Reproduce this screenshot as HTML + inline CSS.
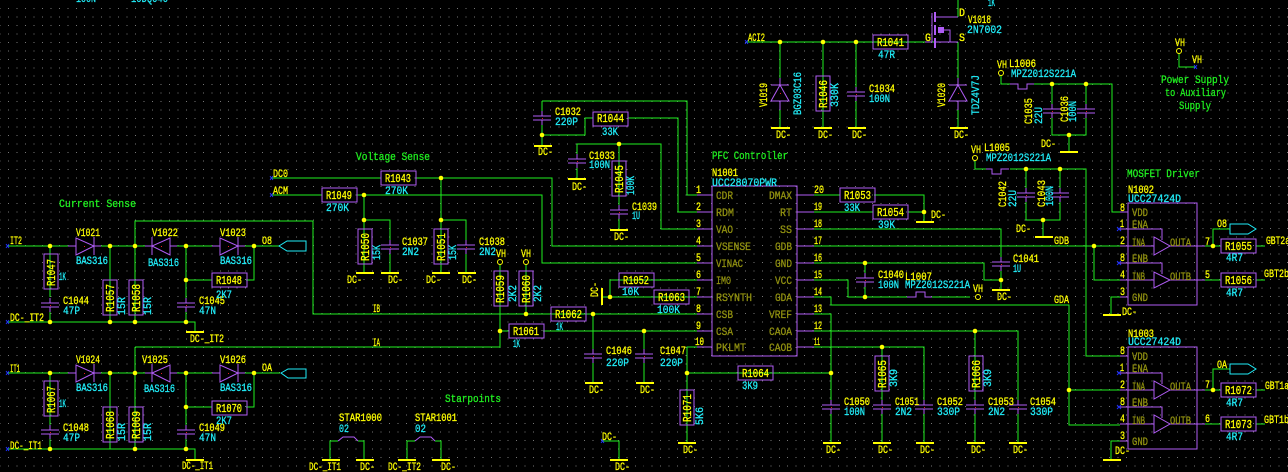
<!DOCTYPE html>
<html><head><meta charset="utf-8"><style>
html,body{margin:0;padding:0;background:#000}
svg{display:block}
text{font-family:"Liberation Mono",monospace;font-size:11px}
.y{fill:#ffff00;stroke:#ffff00;stroke-width:.3}
.c{fill:#20ecf8;stroke:#20ecf8;stroke-width:.3}
.g{fill:#20f020;stroke:#20f020;stroke-width:.3;font-size:11px}
.o{fill:#909010;stroke:#909010;stroke-width:.3}
.b{font-size:12px}
.w{fill:none;stroke:#20f020;stroke-width:1;shape-rendering:crispEdges}
.p{fill:none;stroke:#b05cf5;stroke-width:1;shape-rendering:crispEdges}
.t{fill:none;stroke:#ffff00;stroke-width:2;shape-rendering:crispEdges}
.d{fill:#ffff00}
</style></head><body>
<svg xmlns="http://www.w3.org/2000/svg" width="1288" height="472" viewBox="0 0 1288 472">
<defs>
<g id="cap"><rect x="-9" y="-2" width="18" height="4" fill="#000"/><path class="p" d="M-9-2H9M-9 2H9M0-7V-2M0 2V7"/><rect x="0" y="0" width="1" height="1" fill="#e02020"/></g>
<g id="rv"><rect x="0" y="0" width="14" height="35" fill="#000" class="p"/></g>
<g id="rh"><rect x="0" y="0" width="35" height="14" fill="#000" class="p"/></g>
<g id="dr"><rect x="0" y="-9" width="18" height="18" fill="#000"/><path d="M0-8V9L18 0Z" fill="#000" stroke="#b05cf5"/><path class="p" d="M18-9V9M-8 0H0M18 0H25"/><rect x="8" y="0" width="1" height="1" fill="#e02020"/></g>
<g id="dl"><rect x="0" y="-9" width="18" height="18" fill="#000"/><path d="M18-8V9L0 0Z" fill="#000" stroke="#b05cf5"/><path class="p" d="M0-9V9M-7 0H0M18 0H25"/><rect x="9" y="0" width="1" height="1" fill="#e02020"/></g>
<g id="dv"><rect x="-9" y="0" width="18" height="16" fill="#000"/><path d="M0 0L-9 16H9Z" fill="#000" stroke="#b05cf5"/><path class="p" d="M-9 0H9M0-7V0M0 16V25"/><rect x="0" y="8" width="1" height="1" fill="#e02020"/></g>
<g id="ind"><rect x="0" y="-1" width="24" height="2" fill="#000"/></g>
</defs>
<rect width="1288" height="472" fill="#000"/>
<!-- grid dots -->
<path fill="none" stroke="#767676" stroke-width="1" stroke-dasharray="1 7.47" stroke-dashoffset="-8" shape-rendering="crispEdges" d="M0 8.47H1288M0 16.94H1288M0 25.41H1288M0 33.88H1288M0 42.35H1288M0 50.82H1288M0 59.29H1288M0 67.76H1288M0 76.23H1288M0 84.7H1288M0 93.17H1288M0 101.64H1288M0 110.11H1288M0 118.58H1288M0 127.05H1288M0 135.52H1288M0 143.99H1288M0 152.46H1288M0 160.93H1288M0 169.4H1288M0 177.87H1288M0 186.34H1288M0 194.81H1288M0 203.28H1288M0 211.75H1288M0 220.22H1288M0 228.69H1288M0 237.16H1288M0 245.63H1288M0 254.1H1288M0 262.57H1288M0 271.04H1288M0 279.51H1288M0 287.98H1288M0 296.45H1288M0 304.92H1288M0 313.39H1288M0 321.86H1288M0 330.33H1288M0 338.8H1288M0 347.27H1288M0 355.74H1288M0 364.21H1288M0 372.68H1288M0 381.15H1288M0 389.62H1288M0 398.09H1288M0 406.56H1288M0 415.03H1288M0 423.5H1288M0 431.97H1288M0 440.44H1288M0 448.91H1288M0 457.38H1288M0 465.85H1288"/>

<!-- wires -->
<path class="w" d="
M8 246H280M50 246V297M50 312V322M8 322H195V332M110 246V322M135 246V322M186 246V322M135 246V221H313V314H713
M186 280H212M246 280H254V246
M8 373H280M50 373V449M8 449H195V459M110 373V449M135 347V449M186 373V449M186 407H212M246 407H254V373
M135 347H500V262M500 331H509M543 331H713
M272 178H381M416 178H552V246H713M272 195H322M357 195H542V263H713
M441 178V273M441 220H466V273M364 195V273M364 220H390V273
M526 262V314
M593 314V383M644 331V383
M330 459V441H338M358 441H364V459M407 459V441H415M435 441H441V459
M602 441H619V459
M542 101H687V195H713M542 101V146M542 135H585V118H593M628 118H678V212H713
M577 179V144H661V229H713M619 144V230
M814 195H840M874 195H924V222M814 212H873M908 212H924
M814 229H1001V290M814 246H1120M814 263H984V280H1001M865 263V297M814 280H848V297H970
M814 297H831V305H1069V425H1120M1069 390H1120
M814 314H831V443M814 331H1018V443M975 331V443M814 347H924V443M882 347V443
M697 347H687V443M687 373H831
M610 297V280H713M602 297H713
M746 42H958M780 42V128M823 42V128M856 42V128M958 0V17M958 42V128
M1001 73V84H1112V212H1120M1052 84V135H1086V84M1069 135V152
M975 159V169H1086V356H1120M1026 169V220H1060V169M1043 220V237
M1094 246V280H1120
M1120 297H1111V315M1120 441H1111V459
M1197 246H1221M1213 246V229H1230M1197 280H1221M1256 246H1265M1256 280H1265
M1197 390H1221M1213 390V369H1230M1197 424H1221M1256 390H1265M1256 424H1265
M1179 51V67H1195"/>

<!-- unconnected-end markers -->
<path fill="none" stroke="#2030ff" d="M6 244L9 248M9 244L6 248M6 320L9 324M9 320L6 324M6 371L9 375M9 371L6 375M6 447L9 451M9 447L6 451M270 176L273 180M273 176L270 180M270 193L273 197M273 193L270 197M745 40L748 44M748 40L745 44M601 439L604 443M604 439L601 443M1194 65L1197 69M1197 65L1194 69M1117 227L1121 231M1121 227L1117 231M1117 261L1121 265M1121 261L1117 265M1117 371L1121 375M1121 371L1117 375M1117 405L1121 409M1121 405L1117 409"/>

<!-- supply bars -->
<path class="t" d="M186 332H204M322 460H340M356 460H374M398 460H416M432 460H450M610 460H628M186 460H204
M356 273H374M381 273H399M432 273H450M458 273H476M585 383H603M636 383H654M534 146H552M568 179H586M610 230H628
M916 222H934M992 290H1010M678 443H696M823 443H841M873 443H891M916 443H934M967 443H985M1009 443H1027
M771 128H790M814 128H832M848 128H866M950 128H968M1060 152H1078M1035 237H1053M1103 315H1121M1103 460H1121M602 288V305"/>

<!-- resistors -->
<use href="#rv" x="44" y="254"/><use href="#rv" x="103" y="280"/><use href="#rv" x="129" y="280"/>
<use href="#rv" x="44" y="381"/><use href="#rv" x="103" y="407"/><use href="#rv" x="129" y="407"/>
<use href="#rv" x="358" y="229"/><use href="#rv" x="434" y="229"/><use href="#rv" x="494" y="271"/><use href="#rv" x="519" y="271"/>
<use href="#rv" x="612" y="161"/><use href="#rv" x="680" y="390"/><use href="#rv" x="875" y="356"/><use href="#rv" x="969" y="356"/><use href="#rv" x="816" y="76"/>
<use href="#rh" x="212" y="273"/><use href="#rh" x="212" y="401"/><use href="#rh" x="381" y="171"/><use href="#rh" x="322" y="188"/>
<use href="#rh" x="551" y="307"/><use href="#rh" x="509" y="324"/><use href="#rh" x="593" y="112"/><use href="#rh" x="619" y="273"/><use href="#rh" x="654" y="290"/>
<use href="#rh" x="840" y="188"/><use href="#rh" x="873" y="205"/><use href="#rh" x="738" y="366"/><use href="#rh" x="873" y="35"/>
<use href="#rh" x="1221" y="239"/><use href="#rh" x="1221" y="273"/><use href="#rh" x="1221" y="383"/><use href="#rh" x="1221" y="417"/>

<!-- capacitors -->
<use href="#cap" x="50" y="305"/><use href="#cap" x="186" y="305"/><use href="#cap" x="50" y="432"/><use href="#cap" x="186" y="432"/>
<use href="#cap" x="390" y="247"/><use href="#cap" x="466" y="247"/><use href="#cap" x="593" y="356"/><use href="#cap" x="644" y="356"/>
<use href="#cap" x="542" y="118"/><use href="#cap" x="577" y="161"/><use href="#cap" x="619" y="212"/>
<use href="#cap" x="856" y="94"/><use href="#cap" x="1052" y="111"/><use href="#cap" x="1086" y="111"/><use href="#cap" x="1026" y="195"/><use href="#cap" x="1060" y="195"/>
<use href="#cap" x="1001" y="264"/><use href="#cap" x="865" y="280"/>
<use href="#cap" x="831" y="407"/><use href="#cap" x="882" y="407"/><use href="#cap" x="924" y="407"/><use href="#cap" x="975" y="407"/><use href="#cap" x="1018" y="407"/>

<!-- diodes -->
<use href="#dr" x="76" y="246"/><use href="#dl" x="152" y="246"/><use href="#dr" x="220" y="246"/>
<use href="#dr" x="76" y="373"/><use href="#dl" x="152" y="373"/><use href="#dr" x="220" y="373"/>
<use href="#dv" x="780" y="85"/><use href="#dv" x="958" y="85"/>

<!-- ports -->
<path d="M279 246L287 241H306V251H287Z" fill="#000" stroke="#20ecf8"/>
<path d="M281 373L288 369H306V378H288Z" fill="#000" stroke="#20ecf8"/>
<path d="M1230 224H1248L1256 229L1248 234H1230Z" fill="#000" stroke="#20ecf8"/>
<path d="M1230 364H1248L1256 369L1248 374H1230Z" fill="#000" stroke="#20ecf8"/>

<!-- star symbols -->
<path d="M338 441L343 437H354L358 441M415 441L420 437H431L435 441" fill="none" stroke="#b05cf5"/>

<!-- inductors -->
<use href="#ind" x="907" y="297"/><use href="#ind" x="1010" y="84"/><use href="#ind" x="986" y="169"/>
<path class="p" d="M907 297H916V292H925V297H932M1010 84H1018V89H1027V84H1034M986 169H992V174H1001V169H1009"/>

<!-- mosfet -->
<path class="p" d="M925 42H932V13M958 17H936M936 42H958M944 30H950V42"/>
<path d="M935 12V22M935 25V35M935 38V48" stroke="#b05cf5" stroke-width="2" fill="none"/>
<rect x="938" y="27" width="6" height="6" fill="#b05cf5"/>

<!-- chips -->
<path class="p" d="M712 186H797V356H712ZM697 195H712M697 212H712M697 229H712M697 246H712M697 263H712M697 280H712M697 297H712M697 314H712M697 331H712M697 347H712
M797 195H814M797 212H814M797 229H814M797 246H814M797 263H814M797 280H814M797 297H814M797 314H814M797 331H814M797 347H814"/>
<path class="p" d="M1128 203H1197V305H1128ZM1120 212H1128M1120 229H1162V240M1120 246H1154M1120 263H1162V274M1120 280H1154M1120 297H1128M1170 246H1205M1170 280H1205"/>
<path d="M1154 237V255L1170 246ZM1154 272V288L1170 280Z" fill="#000" stroke="#b05cf5"/>
<path class="p" d="M1128 347H1197V449H1128ZM1120 356H1128M1120 373H1162V384M1120 390H1154M1120 407H1162V418M1120 424H1154M1120 441H1128M1170 390H1205M1170 424H1205"/>
<path d="M1154 381V399L1170 390ZM1154 415V433L1170 424Z" fill="#000" stroke="#b05cf5"/>

<!-- vcc circles -->
<g fill="#000" stroke="#ffff00"><circle cx="500" cy="262" r="2.5"/><circle cx="526" cy="262" r="2.5"/><circle cx="978" cy="297" r="2.5"/><circle cx="1001" cy="73" r="2.5"/><circle cx="975" cy="158" r="2.5"/><circle cx="1179" cy="51" r="2.5"/></g>

<!-- junctions -->
<g class="d">
<circle cx="50" cy="246" r="2.3"/><circle cx="110" cy="246" r="2.3"/><circle cx="135" cy="246" r="2.3"/><circle cx="186" cy="246" r="2.3"/><circle cx="254" cy="246" r="2.3"/><circle cx="186" cy="280" r="2.3"/>
<circle cx="50" cy="322" r="2.3"/><circle cx="110" cy="322" r="2.3"/><circle cx="135" cy="322" r="2.3"/><circle cx="186" cy="322" r="2.3"/>
<circle cx="50" cy="373" r="2.3"/><circle cx="110" cy="373" r="2.3"/><circle cx="135" cy="373" r="2.3"/><circle cx="186" cy="373" r="2.3"/><circle cx="254" cy="373" r="2.3"/><circle cx="186" cy="407" r="2.3"/>
<circle cx="50" cy="449" r="2.3"/><circle cx="135" cy="449" r="2.3"/><circle cx="186" cy="449" r="2.3"/>
<circle cx="441" cy="178" r="2.3"/><circle cx="364" cy="195" r="2.3"/><circle cx="364" cy="220" r="2.3"/><circle cx="441" cy="220" r="2.3"/>
<circle cx="526" cy="314" r="2.3"/><circle cx="593" cy="314" r="2.3"/><circle cx="500" cy="331" r="2.3"/><circle cx="644" cy="331" r="2.3"/>
<circle cx="542" cy="135" r="2.3"/><circle cx="619" cy="144" r="2.3"/><circle cx="610" cy="297" r="2.3"/>
<circle cx="924" cy="212" r="2.3"/><circle cx="865" cy="263" r="2.3"/><circle cx="865" cy="297" r="2.3"/><circle cx="1001" cy="280" r="2.3"/>
<circle cx="975" cy="331" r="2.3"/><circle cx="882" cy="347" r="2.3"/><circle cx="831" cy="373" r="2.3"/><circle cx="687" cy="373" r="2.3"/>
<circle cx="780" cy="42" r="2.3"/><circle cx="823" cy="42" r="2.3"/><circle cx="856" cy="42" r="2.3"/>
<circle cx="1052" cy="84" r="2.3"/><circle cx="1086" cy="84" r="2.3"/><circle cx="1069" cy="135" r="2.3"/><circle cx="1026" cy="169" r="2.3"/><circle cx="1060" cy="169" r="2.3"/><circle cx="1043" cy="220" r="2.3"/>
<circle cx="1094" cy="246" r="2.3"/><circle cx="1213" cy="246" r="2.3"/><circle cx="1069" cy="390" r="2.3"/><circle cx="1213" cy="390" r="2.3"/>
</g>

<!-- green titles -->
<g class="g">
<text x="59" y="207" textLength="77" lengthAdjust="spacingAndGlyphs">Current Sense</text>
<text x="356" y="160" textLength="74" lengthAdjust="spacingAndGlyphs">Voltage Sense</text>
<text x="445" y="402" textLength="56" lengthAdjust="spacingAndGlyphs">Starpoints</text>
<text x="712" y="159" textLength="76" lengthAdjust="spacingAndGlyphs">PFC Controller</text>
<text x="1127" y="177" textLength="73" lengthAdjust="spacingAndGlyphs">MOSFET Driver</text>
<text x="1161" y="83" textLength="68" lengthAdjust="spacingAndGlyphs">Power Supply</text>
<text x="1165" y="96" textLength="61" lengthAdjust="spacingAndGlyphs">to Auxiliary</text>
<text x="1179" y="109" textLength="32" lengthAdjust="spacingAndGlyphs">Supply</text>
</g>

<!-- yellow labels -->
<g class="y">
<text x="10" y="244" textLength="12" lengthAdjust="spacingAndGlyphs">IT2</text>
<text x="76" y="236" textLength="24" lengthAdjust="spacingAndGlyphs">V1021</text>
<text x="152" y="236" textLength="26" lengthAdjust="spacingAndGlyphs">V1022</text>
<text x="220" y="236" textLength="26" lengthAdjust="spacingAndGlyphs">V1023</text>
<text x="63" y="304" textLength="26" lengthAdjust="spacingAndGlyphs">C1044</text>
<text x="199" y="304" textLength="26" lengthAdjust="spacingAndGlyphs">C1045</text>
<text x="10" y="321" textLength="34" lengthAdjust="spacingAndGlyphs">DC-_IT2</text>
<text x="262" y="244" textLength="10" lengthAdjust="spacingAndGlyphs">O8</text>
<text x="190" y="342" textLength="34" lengthAdjust="spacingAndGlyphs">DC-_IT2</text>
<text class="b" x="216" y="284" textLength="26" lengthAdjust="spacingAndGlyphs">R1048</text>
<text class="b" x="216" y="412" textLength="26" lengthAdjust="spacingAndGlyphs">R1070</text>
<text x="10" y="372" textLength="10" lengthAdjust="spacingAndGlyphs">IT1</text>
<text x="76" y="363" textLength="24" lengthAdjust="spacingAndGlyphs">V1024</text>
<text x="142" y="363" textLength="26" lengthAdjust="spacingAndGlyphs">V1025</text>
<text x="220" y="363" textLength="26" lengthAdjust="spacingAndGlyphs">V1026</text>
<text x="63" y="431" textLength="26" lengthAdjust="spacingAndGlyphs">C1048</text>
<text x="199" y="431" textLength="26" lengthAdjust="spacingAndGlyphs">C1049</text>
<text x="10" y="449" textLength="32" lengthAdjust="spacingAndGlyphs">DC-_IT1</text>
<text x="262" y="371" textLength="10" lengthAdjust="spacingAndGlyphs">OA</text>
<text x="182" y="469" textLength="31" lengthAdjust="spacingAndGlyphs">DC-_IT1</text>
<text x="273" y="177" textLength="15" lengthAdjust="spacingAndGlyphs">DC0</text>
<text x="273" y="194" textLength="15" lengthAdjust="spacingAndGlyphs">ACM</text>
<text class="b" x="385" y="182" textLength="26" lengthAdjust="spacingAndGlyphs">R1043</text>
<text class="b" x="326" y="199" textLength="26" lengthAdjust="spacingAndGlyphs">R1049</text>
<text x="402" y="245" textLength="26" lengthAdjust="spacingAndGlyphs">C1037</text>
<text x="479" y="245" textLength="26" lengthAdjust="spacingAndGlyphs">C1038</text>
<text x="496" y="257" textLength="10" lengthAdjust="spacingAndGlyphs">VH</text>
<text x="521" y="257" textLength="10" lengthAdjust="spacingAndGlyphs">VH</text>
<text x="347" y="283" textLength="15" lengthAdjust="spacingAndGlyphs">DC-</text>
<text x="388" y="283" textLength="15" lengthAdjust="spacingAndGlyphs">DC-</text>
<text x="426" y="283" textLength="15" lengthAdjust="spacingAndGlyphs">DC-</text>
<text x="462" y="283" textLength="15" lengthAdjust="spacingAndGlyphs">DC-</text>
<text x="373" y="312" textLength="7" lengthAdjust="spacingAndGlyphs">IB</text>
<text x="373" y="346" textLength="7" lengthAdjust="spacingAndGlyphs">IA</text>
<text class="b" x="555" y="318" textLength="27" lengthAdjust="spacingAndGlyphs">R1062</text>
<text class="b" x="513" y="335" textLength="26" lengthAdjust="spacingAndGlyphs">R1061</text>
<text x="606" y="354" textLength="26" lengthAdjust="spacingAndGlyphs">C1046</text>
<text x="660" y="354" textLength="26" lengthAdjust="spacingAndGlyphs">C1047</text>
<text x="589" y="393" textLength="15" lengthAdjust="spacingAndGlyphs">DC-</text>
<text x="640" y="393" textLength="15" lengthAdjust="spacingAndGlyphs">DC-</text>
<text x="339" y="421" textLength="43" lengthAdjust="spacingAndGlyphs">STAR1000</text>
<text x="415" y="421" textLength="42" lengthAdjust="spacingAndGlyphs">STAR1001</text>
<text x="309" y="470" textLength="32" lengthAdjust="spacingAndGlyphs">DC-_IT1</text>
<text x="360" y="470" textLength="15" lengthAdjust="spacingAndGlyphs">DC-</text>
<text x="388" y="470" textLength="33" lengthAdjust="spacingAndGlyphs">DC-_IT2</text>
<text x="441" y="470" textLength="15" lengthAdjust="spacingAndGlyphs">DC-</text>
<text x="602" y="440" textLength="15" lengthAdjust="spacingAndGlyphs">DC-</text>
<text x="615" y="470" textLength="15" lengthAdjust="spacingAndGlyphs">DC-</text>
<text x="555" y="115" textLength="26" lengthAdjust="spacingAndGlyphs">C1032</text>
<text class="b" x="597" y="122" textLength="27" lengthAdjust="spacingAndGlyphs">R1044</text>
<text x="538" y="155" textLength="15" lengthAdjust="spacingAndGlyphs">DC-</text>
<text x="589" y="159" textLength="26" lengthAdjust="spacingAndGlyphs">C1033</text>
<text x="572" y="190" textLength="15" lengthAdjust="spacingAndGlyphs">DC-</text>
<text x="632" y="210" textLength="25" lengthAdjust="spacingAndGlyphs">C1039</text>
<text x="614" y="240" textLength="15" lengthAdjust="spacingAndGlyphs">DC-</text>
<text x="712" y="176" textLength="26" lengthAdjust="spacingAndGlyphs">N1001</text>
<text class="b" x="623" y="284" textLength="26" lengthAdjust="spacingAndGlyphs">R1052</text>
<text class="b" x="658" y="301" textLength="27" lengthAdjust="spacingAndGlyphs">R1063</text>
<text class="b" x="844" y="199" textLength="27" lengthAdjust="spacingAndGlyphs">R1053</text>
<text class="b" x="877" y="216" textLength="27" lengthAdjust="spacingAndGlyphs">R1054</text>
<text x="931" y="218" textLength="15" lengthAdjust="spacingAndGlyphs">DC-</text>
<text class="b" x="742" y="377" textLength="27" lengthAdjust="spacingAndGlyphs">R1064</text>
<text x="1013" y="262" textLength="26" lengthAdjust="spacingAndGlyphs">C1041</text>
<text x="997" y="300" textLength="15" lengthAdjust="spacingAndGlyphs">DC-</text>
<text x="878" y="278" textLength="26" lengthAdjust="spacingAndGlyphs">C1040</text>
<text x="905" y="280" textLength="27" lengthAdjust="spacingAndGlyphs">L1007</text>
<text x="973" y="292" textLength="10" lengthAdjust="spacingAndGlyphs">VH</text>
<text x="1054" y="244" textLength="15" lengthAdjust="spacingAndGlyphs">GDB</text>
<text x="1054" y="303" textLength="15" lengthAdjust="spacingAndGlyphs">GDA</text>
<text x="683" y="453" textLength="15" lengthAdjust="spacingAndGlyphs">DC-</text>
<text x="826" y="453" textLength="15" lengthAdjust="spacingAndGlyphs">DC-</text>
<text x="878" y="453" textLength="15" lengthAdjust="spacingAndGlyphs">DC-</text>
<text x="920" y="453" textLength="15" lengthAdjust="spacingAndGlyphs">DC-</text>
<text x="971" y="453" textLength="15" lengthAdjust="spacingAndGlyphs">DC-</text>
<text x="1013" y="453" textLength="15" lengthAdjust="spacingAndGlyphs">DC-</text>
<text x="844" y="405" textLength="26" lengthAdjust="spacingAndGlyphs">C1050</text>
<text x="895" y="405" textLength="24" lengthAdjust="spacingAndGlyphs">C1051</text>
<text x="937" y="405" textLength="26" lengthAdjust="spacingAndGlyphs">C1052</text>
<text x="988" y="405" textLength="26" lengthAdjust="spacingAndGlyphs">C1053</text>
<text x="1030" y="405" textLength="26" lengthAdjust="spacingAndGlyphs">C1054</text>
<text x="748" y="41" textLength="17" lengthAdjust="spacingAndGlyphs">ACI2</text>
<text class="b" x="877" y="46" textLength="27" lengthAdjust="spacingAndGlyphs">R1041</text>
<text x="925" y="41" textLength="6" lengthAdjust="spacingAndGlyphs">G</text>
<text x="959" y="16" textLength="6" lengthAdjust="spacingAndGlyphs">D</text>
<text x="959" y="41" textLength="6" lengthAdjust="spacingAndGlyphs">S</text>
<text x="968" y="23" textLength="23" lengthAdjust="spacingAndGlyphs">V1018</text>
<text x="869" y="92" textLength="26" lengthAdjust="spacingAndGlyphs">C1034</text>
<text x="776" y="138" textLength="15" lengthAdjust="spacingAndGlyphs">DC-</text>
<text x="818" y="138" textLength="15" lengthAdjust="spacingAndGlyphs">DC-</text>
<text x="852" y="138" textLength="15" lengthAdjust="spacingAndGlyphs">DC-</text>
<text x="954" y="138" textLength="15" lengthAdjust="spacingAndGlyphs">DC-</text>
<text x="997" y="68" textLength="10" lengthAdjust="spacingAndGlyphs">VH</text>
<text x="1009" y="67" textLength="27" lengthAdjust="spacingAndGlyphs">L1006</text>
<text x="1041" y="147" textLength="15" lengthAdjust="spacingAndGlyphs">DC-</text>
<text x="971" y="153" textLength="10" lengthAdjust="spacingAndGlyphs">VH</text>
<text x="984" y="151" textLength="26" lengthAdjust="spacingAndGlyphs">L1005</text>
<text x="1016" y="232" textLength="15" lengthAdjust="spacingAndGlyphs">DC-</text>
<text x="1175" y="46" textLength="10" lengthAdjust="spacingAndGlyphs">VH</text>
<text x="1192" y="63" textLength="10" lengthAdjust="spacingAndGlyphs">VH</text>
<text x="1128" y="193" textLength="26" lengthAdjust="spacingAndGlyphs">N1002</text>
<text x="1128" y="337" textLength="26" lengthAdjust="spacingAndGlyphs">N1003</text>
<text x="1217" y="227" textLength="10" lengthAdjust="spacingAndGlyphs">O8</text>
<text x="1217" y="368" textLength="10" lengthAdjust="spacingAndGlyphs">OA</text>
<text class="b" x="1225" y="250" textLength="27" lengthAdjust="spacingAndGlyphs">R1055</text>
<text class="b" x="1225" y="284" textLength="27" lengthAdjust="spacingAndGlyphs">R1056</text>
<text class="b" x="1225" y="394" textLength="27" lengthAdjust="spacingAndGlyphs">R1072</text>
<text class="b" x="1225" y="428" textLength="27" lengthAdjust="spacingAndGlyphs">R1073</text>
<text x="1266" y="244" textLength="24" lengthAdjust="spacingAndGlyphs">GBT2a</text>
<text x="1264" y="277" textLength="25" lengthAdjust="spacingAndGlyphs">GBT2b</text>
<text x="1265" y="389" textLength="24" lengthAdjust="spacingAndGlyphs">GBT1a</text>
<text x="1264" y="423" textLength="25" lengthAdjust="spacingAndGlyphs">GBT1b</text>
<text x="1122" y="315" textLength="15" lengthAdjust="spacingAndGlyphs">DC-</text>
<text x="1115" y="454" textLength="15" lengthAdjust="spacingAndGlyphs">DC-</text>
<!-- pin numbers U1 -->
<text x="696" y="193" textLength="5" lengthAdjust="spacingAndGlyphs">1</text><text x="696" y="210" textLength="5" lengthAdjust="spacingAndGlyphs">2</text><text x="696" y="227" textLength="5" lengthAdjust="spacingAndGlyphs">3</text><text x="696" y="244" textLength="5" lengthAdjust="spacingAndGlyphs">4</text><text x="696" y="261" textLength="5" lengthAdjust="spacingAndGlyphs">5</text><text x="696" y="278" textLength="5" lengthAdjust="spacingAndGlyphs">6</text><text x="696" y="295" textLength="5" lengthAdjust="spacingAndGlyphs">7</text><text x="696" y="312" textLength="5" lengthAdjust="spacingAndGlyphs">8</text><text x="696" y="329" textLength="5" lengthAdjust="spacingAndGlyphs">9</text><text x="695" y="345" textLength="9" lengthAdjust="spacingAndGlyphs">10</text>
<text x="814" y="193" textLength="10" lengthAdjust="spacingAndGlyphs">20</text><text x="814" y="210" textLength="8" lengthAdjust="spacingAndGlyphs">19</text><text x="814" y="227" textLength="8" lengthAdjust="spacingAndGlyphs">18</text><text x="814" y="244" textLength="8" lengthAdjust="spacingAndGlyphs">17</text><text x="814" y="261" textLength="8" lengthAdjust="spacingAndGlyphs">16</text><text x="814" y="278" textLength="8" lengthAdjust="spacingAndGlyphs">15</text><text x="814" y="295" textLength="8" lengthAdjust="spacingAndGlyphs">14</text><text x="814" y="312" textLength="8" lengthAdjust="spacingAndGlyphs">13</text><text x="814" y="329" textLength="8" lengthAdjust="spacingAndGlyphs">12</text><text x="814" y="345" textLength="6" lengthAdjust="spacingAndGlyphs">11</text>
<!-- pin numbers U2/U3 -->
<text x="1120" y="211" textLength="5" lengthAdjust="spacingAndGlyphs">8</text><text x="1120" y="227" textLength="4" lengthAdjust="spacingAndGlyphs">1</text><text x="1120" y="244" textLength="5" lengthAdjust="spacingAndGlyphs">2</text><text x="1120" y="261" textLength="5" lengthAdjust="spacingAndGlyphs">8</text><text x="1120" y="278" textLength="5" lengthAdjust="spacingAndGlyphs">4</text><text x="1120" y="295" textLength="5" lengthAdjust="spacingAndGlyphs">3</text><text x="1205" y="245" textLength="5" lengthAdjust="spacingAndGlyphs">7</text><text x="1205" y="278" textLength="5" lengthAdjust="spacingAndGlyphs">5</text>
<text x="1120" y="354" textLength="5" lengthAdjust="spacingAndGlyphs">8</text><text x="1120" y="371" textLength="4" lengthAdjust="spacingAndGlyphs">1</text><text x="1120" y="388" textLength="5" lengthAdjust="spacingAndGlyphs">2</text><text x="1120" y="405" textLength="5" lengthAdjust="spacingAndGlyphs">8</text><text x="1120" y="422" textLength="5" lengthAdjust="spacingAndGlyphs">4</text><text x="1120" y="439" textLength="5" lengthAdjust="spacingAndGlyphs">3</text><text x="1205" y="388" textLength="5" lengthAdjust="spacingAndGlyphs">7</text><text x="1205" y="422" textLength="5" lengthAdjust="spacingAndGlyphs">6</text>
<!-- vertical yellow -->
<text class="b" transform="translate(55,286) rotate(-90)" textLength="27" lengthAdjust="spacingAndGlyphs">R1047</text>
<text class="b" transform="translate(114,312) rotate(-90)" textLength="28" lengthAdjust="spacingAndGlyphs">R1057</text>
<text class="b" transform="translate(140,312) rotate(-90)" textLength="28" lengthAdjust="spacingAndGlyphs">R1058</text>
<text class="b" transform="translate(55,413) rotate(-90)" textLength="27" lengthAdjust="spacingAndGlyphs">R1067</text>
<text class="b" transform="translate(114,439) rotate(-90)" textLength="28" lengthAdjust="spacingAndGlyphs">R1068</text>
<text class="b" transform="translate(140,439) rotate(-90)" textLength="28" lengthAdjust="spacingAndGlyphs">R1069</text>
<text class="b" transform="translate(369,261) rotate(-90)" textLength="28" lengthAdjust="spacingAndGlyphs">R1050</text>
<text class="b" transform="translate(445,261) rotate(-90)" textLength="28" lengthAdjust="spacingAndGlyphs">R1051</text>
<text class="b" transform="translate(504,303) rotate(-90)" textLength="28" lengthAdjust="spacingAndGlyphs">R1059</text>
<text class="b" transform="translate(530,303) rotate(-90)" textLength="28" lengthAdjust="spacingAndGlyphs">R1060</text>
<text class="b" transform="translate(623,193) rotate(-90)" textLength="28" lengthAdjust="spacingAndGlyphs">R1045</text>
<text class="b" transform="translate(691,422) rotate(-90)" textLength="28" lengthAdjust="spacingAndGlyphs">R1071</text>
<text class="b" transform="translate(886,388) rotate(-90)" textLength="28" lengthAdjust="spacingAndGlyphs">R1065</text>
<text class="b" transform="translate(980,388) rotate(-90)" textLength="28" lengthAdjust="spacingAndGlyphs">R1066</text>
<text class="b" transform="translate(827,108) rotate(-90)" textLength="28" lengthAdjust="spacingAndGlyphs">R1046</text>
<text transform="translate(767,107) rotate(-90)" textLength="24" lengthAdjust="spacingAndGlyphs">V1019</text>
<text transform="translate(945,107) rotate(-90)" textLength="24" lengthAdjust="spacingAndGlyphs">V1020</text>
<text transform="translate(1032,124) rotate(-90)" textLength="26" lengthAdjust="spacingAndGlyphs">C1035</text>
<text transform="translate(1068,122) rotate(-90)" textLength="26" lengthAdjust="spacingAndGlyphs">C1036</text>
<text transform="translate(1006,207) rotate(-90)" textLength="26" lengthAdjust="spacingAndGlyphs">C1042</text>
<text transform="translate(1045,207) rotate(-90)" textLength="27" lengthAdjust="spacingAndGlyphs">C1043</text>
<text transform="translate(598,297) rotate(-90)" textLength="15" lengthAdjust="spacingAndGlyphs">DC-</text>
</g>

<!-- cyan labels -->
<g class="c">
<text x="76" y="2" textLength="20" lengthAdjust="spacingAndGlyphs">100N</text>
<text x="131" y="2" textLength="37" lengthAdjust="spacingAndGlyphs">10DQ040</text>
<text x="76" y="264" textLength="32" lengthAdjust="spacingAndGlyphs">BAS316</text>
<text x="148" y="266" textLength="31" lengthAdjust="spacingAndGlyphs">BAS316</text>
<text x="220" y="264" textLength="32" lengthAdjust="spacingAndGlyphs">BAS316</text>
<text x="59" y="280" textLength="7" lengthAdjust="spacingAndGlyphs">1K</text>
<text x="63" y="314" textLength="17" lengthAdjust="spacingAndGlyphs">47P</text>
<text x="199" y="314" textLength="17" lengthAdjust="spacingAndGlyphs">47N</text>
<text x="216" y="298" textLength="16" lengthAdjust="spacingAndGlyphs">2K7</text>
<text x="76" y="391" textLength="32" lengthAdjust="spacingAndGlyphs">BAS316</text>
<text x="144" y="392" textLength="31" lengthAdjust="spacingAndGlyphs">BAS316</text>
<text x="220" y="391" textLength="32" lengthAdjust="spacingAndGlyphs">BAS316</text>
<text x="59" y="407" textLength="7" lengthAdjust="spacingAndGlyphs">1K</text>
<text x="63" y="441" textLength="17" lengthAdjust="spacingAndGlyphs">47P</text>
<text x="199" y="441" textLength="17" lengthAdjust="spacingAndGlyphs">47N</text>
<text x="216" y="424" textLength="16" lengthAdjust="spacingAndGlyphs">2K7</text>
<text x="385" y="194" textLength="23" lengthAdjust="spacingAndGlyphs">270K</text>
<text x="326" y="211" textLength="23" lengthAdjust="spacingAndGlyphs">270K</text>
<text x="402" y="255" textLength="17" lengthAdjust="spacingAndGlyphs">2N2</text>
<text x="479" y="255" textLength="17" lengthAdjust="spacingAndGlyphs">2N2</text>
<text x="556" y="330" textLength="7" lengthAdjust="spacingAndGlyphs">1K</text>
<text x="513" y="347" textLength="7" lengthAdjust="spacingAndGlyphs">1K</text>
<text x="606" y="366" textLength="23" lengthAdjust="spacingAndGlyphs">220P</text>
<text x="660" y="366" textLength="23" lengthAdjust="spacingAndGlyphs">220P</text>
<text x="339" y="432" textLength="10" lengthAdjust="spacingAndGlyphs">02</text>
<text x="415" y="432" textLength="11" lengthAdjust="spacingAndGlyphs">02</text>
<text x="555" y="125" textLength="23" lengthAdjust="spacingAndGlyphs">220P</text>
<text x="602" y="135" textLength="16" lengthAdjust="spacingAndGlyphs">33K</text>
<text x="589" y="168" textLength="21" lengthAdjust="spacingAndGlyphs">100N</text>
<text x="632" y="219" textLength="8" lengthAdjust="spacingAndGlyphs">1U</text>
<text x="712" y="186" textLength="65" lengthAdjust="spacingAndGlyphs">UCC28070PWR</text>
<text x="622" y="295" textLength="17" lengthAdjust="spacingAndGlyphs">10K</text>
<text x="657" y="313" textLength="23" lengthAdjust="spacingAndGlyphs">100K</text>
<text x="844" y="211" textLength="16" lengthAdjust="spacingAndGlyphs">33K</text>
<text x="878" y="228" textLength="17" lengthAdjust="spacingAndGlyphs">39K</text>
<text x="1013" y="272" textLength="8" lengthAdjust="spacingAndGlyphs">1U</text>
<text x="878" y="288" textLength="21" lengthAdjust="spacingAndGlyphs">100N</text>
<text x="905" y="288" textLength="65" lengthAdjust="spacingAndGlyphs">MPZ2012S221A</text>
<text x="742" y="389" textLength="16" lengthAdjust="spacingAndGlyphs">3K9</text>
<text x="844" y="415" textLength="21" lengthAdjust="spacingAndGlyphs">100N</text>
<text x="895" y="415" textLength="17" lengthAdjust="spacingAndGlyphs">2N2</text>
<text x="937" y="415" textLength="23" lengthAdjust="spacingAndGlyphs">330P</text>
<text x="988" y="415" textLength="17" lengthAdjust="spacingAndGlyphs">2N2</text>
<text x="1030" y="415" textLength="23" lengthAdjust="spacingAndGlyphs">330P</text>
<text x="878" y="58" textLength="17" lengthAdjust="spacingAndGlyphs">47R</text>
<text x="967" y="33" textLength="35" lengthAdjust="spacingAndGlyphs">2N7002</text>
<text x="988" y="6" textLength="7" lengthAdjust="spacingAndGlyphs">1K</text>
<text x="869" y="102" textLength="21" lengthAdjust="spacingAndGlyphs">100N</text>
<text x="1011" y="77" textLength="65" lengthAdjust="spacingAndGlyphs">MPZ2012S221A</text>
<text x="986" y="161" textLength="65" lengthAdjust="spacingAndGlyphs">MPZ2012S221A</text>
<text x="1128" y="202" textLength="53" lengthAdjust="spacingAndGlyphs">UCC27424D</text>
<text x="1128" y="345" textLength="53" lengthAdjust="spacingAndGlyphs">UCC27424D</text>
<text x="1226" y="261" textLength="17" lengthAdjust="spacingAndGlyphs">4R7</text>
<text x="1226" y="296" textLength="17" lengthAdjust="spacingAndGlyphs">4R7</text>
<text x="1226" y="406" textLength="17" lengthAdjust="spacingAndGlyphs">4R7</text>
<text x="1226" y="440" textLength="17" lengthAdjust="spacingAndGlyphs">4R7</text>
<!-- vertical cyan -->
<text transform="translate(125,315) rotate(-90)" textLength="18" lengthAdjust="spacingAndGlyphs">15R</text>
<text transform="translate(151,315) rotate(-90)" textLength="18" lengthAdjust="spacingAndGlyphs">15R</text>
<text transform="translate(125,441) rotate(-90)" textLength="18" lengthAdjust="spacingAndGlyphs">15R</text>
<text transform="translate(151,441) rotate(-90)" textLength="18" lengthAdjust="spacingAndGlyphs">15R</text>
<text transform="translate(380,260) rotate(-90)" textLength="15" lengthAdjust="spacingAndGlyphs">15K</text>
<text transform="translate(456,260) rotate(-90)" textLength="15" lengthAdjust="spacingAndGlyphs">15K</text>
<text transform="translate(516,302) rotate(-90)" textLength="17" lengthAdjust="spacingAndGlyphs">2K2</text>
<text transform="translate(541,302) rotate(-90)" textLength="17" lengthAdjust="spacingAndGlyphs">2K2</text>
<text transform="translate(634,195) rotate(-90)" textLength="19" lengthAdjust="spacingAndGlyphs">100K</text>
<text transform="translate(703,425) rotate(-90)" textLength="18" lengthAdjust="spacingAndGlyphs">5K6</text>
<text transform="translate(897,387) rotate(-90)" textLength="18" lengthAdjust="spacingAndGlyphs">3K9</text>
<text transform="translate(991,387) rotate(-90)" textLength="18" lengthAdjust="spacingAndGlyphs">3K9</text>
<text transform="translate(801,115) rotate(-90)" textLength="43" lengthAdjust="spacingAndGlyphs">BGZ03C16</text>
<text transform="translate(838,107) rotate(-90)" textLength="24" lengthAdjust="spacingAndGlyphs">330K</text>
<text transform="translate(979,115) rotate(-90)" textLength="40" lengthAdjust="spacingAndGlyphs">TDZ4V7J</text>
<text transform="translate(1042,124) rotate(-90)" textLength="17" lengthAdjust="spacingAndGlyphs">22U</text>
<text transform="translate(1076,122) rotate(-90)" textLength="21" lengthAdjust="spacingAndGlyphs">100N</text>
<text transform="translate(1016,207) rotate(-90)" textLength="17" lengthAdjust="spacingAndGlyphs">22U</text>
<text transform="translate(1053,206) rotate(-90)" textLength="20" lengthAdjust="spacingAndGlyphs">100N</text>
</g>

<!-- olive pin names -->
<g class="o">
<text x="716" y="199" textLength="17" lengthAdjust="spacingAndGlyphs">CDR</text>
<text x="716" y="216" textLength="18" lengthAdjust="spacingAndGlyphs">RDM</text>
<text x="716" y="233" textLength="17" lengthAdjust="spacingAndGlyphs">VAO</text>
<text x="716" y="250" textLength="35" lengthAdjust="spacingAndGlyphs">VSENSE</text>
<text x="716" y="267" textLength="27" lengthAdjust="spacingAndGlyphs">VINAC</text>
<text x="716" y="284" textLength="15" lengthAdjust="spacingAndGlyphs">IMO</text>
<text x="716" y="301" textLength="36" lengthAdjust="spacingAndGlyphs">RSYNTH</text>
<text x="716" y="318" textLength="17" lengthAdjust="spacingAndGlyphs">CSB</text>
<text x="716" y="335" textLength="17" lengthAdjust="spacingAndGlyphs">CSA</text>
<text x="716" y="351" textLength="30" lengthAdjust="spacingAndGlyphs">PKLMT</text>
<text x="769" y="199" textLength="23" lengthAdjust="spacingAndGlyphs">DMAX</text>
<text x="780" y="216" textLength="12" lengthAdjust="spacingAndGlyphs">RT</text>
<text x="780" y="233" textLength="12" lengthAdjust="spacingAndGlyphs">SS</text>
<text x="775" y="250" textLength="17" lengthAdjust="spacingAndGlyphs">GDB</text>
<text x="775" y="267" textLength="17" lengthAdjust="spacingAndGlyphs">GND</text>
<text x="775" y="284" textLength="17" lengthAdjust="spacingAndGlyphs">VCC</text>
<text x="775" y="301" textLength="17" lengthAdjust="spacingAndGlyphs">GDA</text>
<text x="769" y="318" textLength="23" lengthAdjust="spacingAndGlyphs">VREF</text>
<text x="769" y="335" textLength="23" lengthAdjust="spacingAndGlyphs">CAOA</text>
<text x="769" y="351" textLength="23" lengthAdjust="spacingAndGlyphs">CAOB</text>
<text x="1132" y="216" textLength="16" lengthAdjust="spacingAndGlyphs">VDD</text>
<text x="1132" y="228" textLength="16" lengthAdjust="spacingAndGlyphs">ENA</text>
<text x="1132" y="246" textLength="13" lengthAdjust="spacingAndGlyphs">INA</text>
<text x="1132" y="262" textLength="16" lengthAdjust="spacingAndGlyphs">ENB</text>
<text x="1132" y="280" textLength="13" lengthAdjust="spacingAndGlyphs">INB</text>
<text x="1132" y="301" textLength="16" lengthAdjust="spacingAndGlyphs">GND</text>
<text x="1170" y="246" textLength="21" lengthAdjust="spacingAndGlyphs">OUTA</text>
<text x="1170" y="280" textLength="21" lengthAdjust="spacingAndGlyphs">OUTB</text>
<text x="1132" y="360" textLength="16" lengthAdjust="spacingAndGlyphs">VDD</text>
<text x="1132" y="372" textLength="16" lengthAdjust="spacingAndGlyphs">ENA</text>
<text x="1132" y="390" textLength="13" lengthAdjust="spacingAndGlyphs">INA</text>
<text x="1132" y="406" textLength="16" lengthAdjust="spacingAndGlyphs">ENB</text>
<text x="1132" y="424" textLength="13" lengthAdjust="spacingAndGlyphs">INB</text>
<text x="1132" y="445" textLength="16" lengthAdjust="spacingAndGlyphs">GND</text>
<text x="1170" y="390" textLength="21" lengthAdjust="spacingAndGlyphs">OUTA</text>
<text x="1170" y="424" textLength="21" lengthAdjust="spacingAndGlyphs">OUTB</text>
</g>
</svg>
</body></html>
